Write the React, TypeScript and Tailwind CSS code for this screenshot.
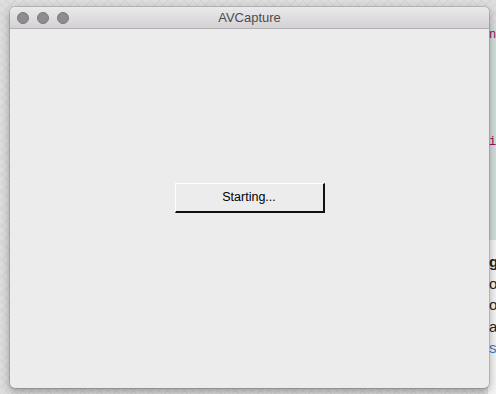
import React from "react";

function TrafficLight() {
  return <span className="w-3 h-3 rounded-full bg-[#8d8c8f] border border-[#7a797c]" />;
}

export default function App() {
  return (
    <div className="relative w-[496px] h-[394px] overflow-hidden bg-[#dedede] bg-[repeating-linear-gradient(45deg,#d6d6d6_0px,#d6d6d6_1px,transparent_1px,transparent_6px),repeating-linear-gradient(-45deg,#d6d6d6_0px,#d6d6d6_1px,transparent_1px,transparent_6px)] font-['Liberation_Sans',Arial,sans-serif]">
      {/* document window behind, only its left edge shows */}
      <div className="absolute left-[488px] top-[26px] w-[60px] h-[380px] flex flex-col">
        <div className="h-[214px] bg-[#d3dedc] relative font-['Liberation_Mono',monospace] text-[12px] text-[#8a1458]">
          <span className="absolute left-[1px] top-[0px]">ng</span>
          <span className="absolute left-[1px] top-[107px]">ir</span>
        </div>
        <div className="flex-1 bg-[#f4f4f4] flex flex-col pl-[1px] pt-[14px] gap-[5.5px] text-[15px] leading-[16px] text-[#222]">
          <span className="font-bold">g</span>
          <span>o</span>
          <span>o</span>
          <span>a</span>
          <span className="text-[#3a7ec0]">s</span>
        </div>
      </div>

      <div className="absolute left-[10px] top-[7px] w-[479px] h-[381px] flex flex-col rounded-[5px] overflow-hidden bg-[#ececec] shadow-[0_3px_10px_rgba(0,0,0,0.35),0_0_0_1px_rgba(0,0,0,0.12)]">
        <div className="h-[22px] shrink-0 flex items-center relative bg-gradient-to-b from-[#ebe9eb] to-[#d4d2d4] border-b border-[#b3b1b3]">
          <div className="flex items-center gap-[8px] pl-[7px]">
            <TrafficLight />
            <TrafficLight />
            <TrafficLight />
          </div>
          <div className="absolute inset-0 flex items-center justify-center text-[13px] text-[#4c4c4c]">
            AVCapture
          </div>
        </div>
        <div className="flex-1 flex items-center justify-center pb-[21px]">
          <button className="w-[150px] h-[30px] bg-[#ececec] border-t border-l border-white border-b-2 border-r-2 border-b-[#111] border-r-[#111] text-[12.5px] text-black">
            Starting...
          </button>
        </div>
      </div>
    </div>
  );
}
